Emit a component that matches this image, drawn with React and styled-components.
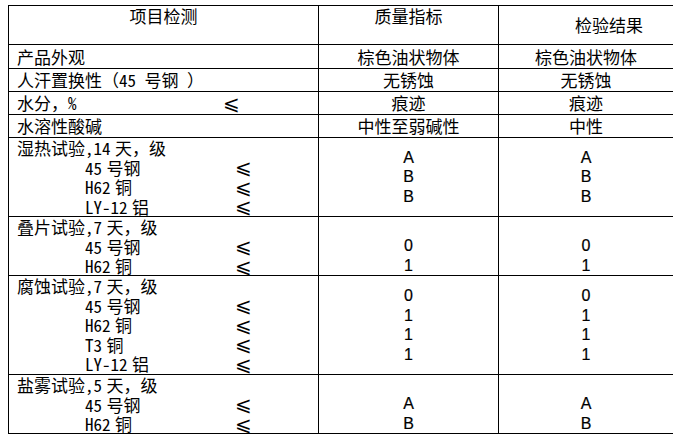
import React from 'react'
import styled, { createGlobalStyle } from 'styled-components'

// simple test-report table: item / spec / result
const simpleRows = [
  { label: '产品外观', spec: '棕色油状物体', result: '棕色油状物体' },
  { label: '人汗置换性（45 号钢 ）', spec: '无锈蚀', result: '无锈蚀' },
  { label: '水分，%', sign: true, spec: '痕迹', result: '痕迹' },
  { label: '水溶性酸碱', spec: '中性至弱碱性', result: '中性' },
]

const groups = [
  {
    title: '湿热试验,14 天，级',
    items: ['45 号钢', 'H62 铜', 'LY-12 铝'],
    spec: ['A', 'B', 'B'],
    result: ['A', 'B', 'B'],
  },
  {
    title: '叠片试验,7 天，级',
    items: ['45 号钢', 'H62 铜'],
    spec: ['', '0', '1'],
    result: ['', '0', '1'],
  },
  {
    title: '腐蚀试验,7 天，级',
    items: ['45 号钢', 'H62 铜', 'T3 铜', 'LY-12 铝'],
    spec: ['0', '1', '1', '1'],
    result: ['0', '1', '1', '1'],
  },
  {
    title: '盐雾试验,5 天，级',
    items: ['45 号钢', 'H62 铜'],
    spec: ['', 'A', 'B'],
    result: ['', 'A', 'B'],
  },
]

export default function App() {
  return (
    <>
      <GlobalStyle />
      <Sheet>
        <HeadCell>项目检测</HeadCell>
        <HeadCell>质量指标</HeadCell>
        <HeadCell $middle $shift={46}>检验结果</HeadCell>

        {simpleRows.map((row) => (
          <React.Fragment key={row.label}>
            <LabelCell>
              <Line>
                <Label $w={row.sign ? 206 : undefined}>{row.label}</Label>
                {row.sign && <Sign>⩽</Sign>}
              </Line>
            </LabelCell>
            <ValueCell>{row.spec}</ValueCell>
            <ValueCell>{row.result}</ValueCell>
          </React.Fragment>
        ))}

        {groups.map((g) => (
          <React.Fragment key={g.title}>
            <GroupCell>
              <SubLine>{g.title}</SubLine>
              {g.items.map((it) => (
                <SubLine key={it} $indent>
                  <Label $w={150}>{it}</Label>
                  <Sign>⩽</Sign>
                </SubLine>
              ))}
            </GroupCell>
            <GradeCell>
              {g.spec.map((v, i) => (
                <Grade key={i}>{v || '\u00a0'}</Grade>
              ))}
            </GradeCell>
            <GradeCell>
              {g.result.map((v, i) => (
                <Grade key={i}>{v || '\u00a0'}</Grade>
              ))}
            </GradeCell>
          </React.Fragment>
        ))}
      </Sheet>
    </>
  )
}

const GlobalStyle = createGlobalStyle`
  body {
    margin: 5px 8px;
    background: #fff;
    color: #000;
    font-family: "Noto Sans Mono CJK SC", "Noto Sans CJK SC", sans-serif;
    font-size: 17px;
  }
`

const Sheet = styled.div`
  display: grid;
  grid-template-columns: 310px 180px 175px;
  grid-template-rows: 39px 24px 23px 23px 23px 79px 59px 99px 59px;
  width: 666px;
  box-sizing: border-box;
  border-top: 1px solid #000;
  border-left: 1px solid #000;
`

const Cell = styled.div`
  box-sizing: border-box;
  border-right: 1px solid #000;
  border-bottom: 1px solid #000;
  display: flex;
  flex-direction: column;
  overflow: hidden;
  white-space: pre;
`

const HeadCell = styled(Cell)`
  justify-content: ${(p) => (p.$middle ? 'center' : 'flex-start')};
  align-items: center;
  padding-left: ${(p) => p.$shift || 0}px;
  line-height: 20px;
`

const LabelCell = styled(Cell)`
  justify-content: center;
  padding-left: 8px;
  line-height: 22px;
`

const ValueCell = styled(Cell)`
  justify-content: center;
  align-items: center;
  line-height: 22px;
`

const GroupCell = styled(Cell)`
  padding-left: 8px;
  line-height: 19.5px;
  word-spacing: -4px;
`

const GradeCell = styled(Cell)`
  justify-content: center;
  align-items: center;
  font-family: "Liberation Sans", Arial, sans-serif;
  font-size: 16px;
  line-height: 19.5px;
  -webkit-text-stroke: 0.2px #000;
`

const Grade = styled.div`
  height: 19.5px;
`

const Line = styled.div`
  display: flex;
  align-items: center;
`

const SubLine = styled.div`
  display: flex;
  align-items: center;
  height: 19.5px;
  padding-left: ${(p) => (p.$indent ? 68 : 0)}px;
`

const Label = styled.span`
  display: inline-block;
  width: ${(p) => (p.$w ? `${p.$w}px` : 'auto')};
`

const Sign = styled.span`
  font-family: "DejaVu Sans", sans-serif;
  font-size: 20px;
  line-height: 1;
  word-spacing: normal;
`
